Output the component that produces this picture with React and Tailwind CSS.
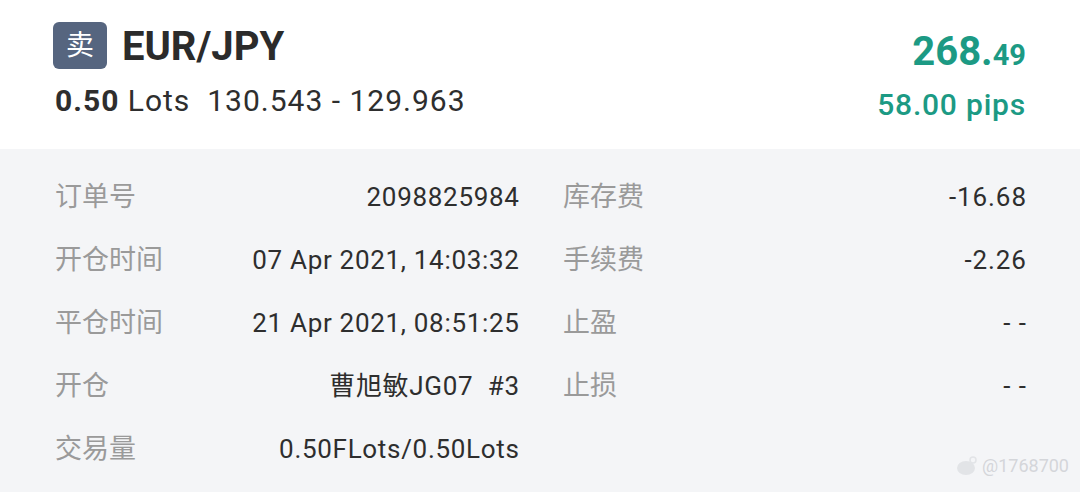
import React from "react";

const rows = [
  ["订单号", "2098825984", "库存费", "-16.68"],
  ["开仓时间", "07 Apr 2021, 14:03:32", "手续费", "-2.26"],
  ["平仓时间", "21 Apr 2021, 08:51:25", "止盈", "- -"],
  ["开仓", "曹旭敏JG07  #3", "止损", "- -"],
  ["交易量", "0.50FLots/0.50Lots", "", ""],
];

const font = {
  fontFamily: '"Roboto", "Noto Sans CJK SC", sans-serif',
};

export default function App() {
  return (
    <div
      className="w-[1080px] h-[495px] bg-white relative overflow-hidden"
      style={font}
    >
      {/* Header */}
      <div className="h-[149px] flex justify-between pl-[53px] pr-[54px] pt-[22px]">
        <div className="flex flex-col">
          <div className="flex items-center gap-[15px]">
            <div className="w-[54px] h-[47px] rounded-[6px] bg-[#56657f] flex items-center justify-center text-white text-[28px] leading-none">
              卖
            </div>
            <div className="mt-[2px] text-[40px] font-bold text-[#2b2b2b] leading-none">
              EUR/JPY
            </div>
          </div>
          <div className="mt-[17px] pl-[2px] text-[30px] leading-none text-[#2e2e2e] whitespace-pre tracking-[1px]">
            <span className="font-bold">0.50</span> Lots  130.543 - 129.963
          </div>
        </div>
        <div className="flex flex-col items-end text-[#1c9a84]">
          <div className="mt-[10px] font-bold leading-none">
            <span className="text-[40px]">268.</span>
            <span className="text-[29px]">49</span>
          </div>
          <div className="mt-[18px] text-[30px] font-medium leading-none tracking-[0.8px]">
            58.00 pips
          </div>
        </div>
      </div>

      {/* Detail */}
      <div className="h-[343px] bg-[#f4f5f7] pt-[17px] pl-[55px] pr-[54px]">
        {rows.map(([l1, v1, l2, v2], i) => (
          <div key={i} className="h-[63px] flex items-center">
            <div className="w-[464px] flex justify-between items-center">
              <span className="text-[27px] text-[#9a9a9a]">{l1}</span>
              <span className="text-[26px] text-[#2e2e2e] whitespace-pre tracking-[0.7px] -mr-[0.7px]">
                {v1}
              </span>
            </div>
            <div className="ml-[44px] flex-1 flex justify-between items-center">
              <span className="text-[27px] text-[#9a9a9a]">{l2}</span>
              <span className="text-[26px] text-[#2e2e2e] whitespace-pre tracking-[0.9px] -mr-[0.9px]">
                {v2}
              </span>
            </div>
          </div>
        ))}
      </div>

      {/* Watermark */}
      <div className="absolute left-[956px] top-[452px] flex items-center gap-[4px] text-[#d4d6da] text-[18px]">
        <svg width="22" height="20" viewBox="0 0 22 20">
          <ellipse cx="10" cy="12" rx="9" ry="7" fill="#e2e4e7" />
          <circle cx="17" cy="4" r="3" fill="none" stroke="#e2e4e7" strokeWidth="1.5" />
        </svg>
        <span>@1768700</span>
      </div>
    </div>
  );
}
